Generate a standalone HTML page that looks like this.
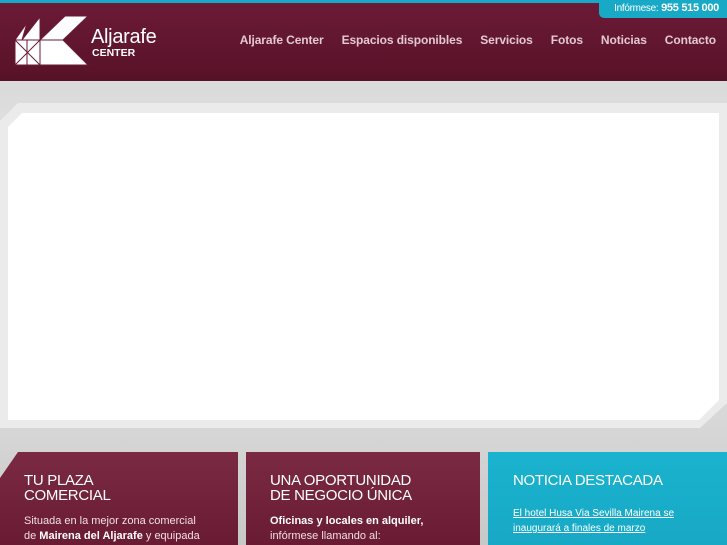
<!DOCTYPE html>
<html><head><meta charset="utf-8"><style>
body{margin:0;width:727px;height:545px;overflow:hidden;font-family:"Liberation Sans",sans-serif;background:linear-gradient(#cfcfcf,#e4e4e4 30%,#dcdcdc 70%,#c8c8c8);position:relative}
.top{position:absolute;left:0;top:0;width:727px;height:3px;background:#17a9c6}
.hdr{position:absolute;left:0;top:3px;width:727px;height:78px;background:linear-gradient(#6c1a37,#571227)}
.info{position:absolute;right:0;top:0;width:128px;height:18px;background:#17a9c6;border-radius:0 0 0 5px;color:#fff;font-size:11px;font-weight:bold;line-height:17px;text-align:right;padding-right:8px;box-sizing:border-box;letter-spacing:-0.3px}
.info span{font-weight:normal;font-size:10px}
nav{position:absolute;top:33px;right:11px;color:#e3c9d1;font-size:12px;font-weight:bold;letter-spacing:-0.1px}
nav a{margin-left:18px}
.panelbg{position:absolute;left:0;top:103px;width:727px;height:325px;background:#ebebeb;clip-path:polygon(18px 0,100% 0,100% 300px,700px 100%,0 100%,0 18px)}
.panel{position:absolute;left:8px;top:113px;width:711px;height:307px;background:#fff;clip-path:polygon(14px 0,100% 0,100% 287px,691px 100%,0 100%,0 14px)}
.box{position:absolute;top:452px;height:93px;color:#fff}
.b1{left:0;width:238px;background:linear-gradient(#7a2a43,#6a1b34);clip-path:polygon(18px 0,100% 0,100% 100%,0 100%,0 26px)}
.b2{left:246px;width:234px;background:linear-gradient(#7a2a43,#6a1b34)}
.b3{left:488px;width:239px;background:linear-gradient(#1ab3cf,#17a8c5)}
h2{margin:0;position:absolute;font-weight:normal;font-size:15px;line-height:15px;letter-spacing:-0.3px}
p{margin:0;position:absolute;font-size:11px;line-height:15px;color:#f0dfe4}
</style></head><body>
<div class="top"></div>
<div class="hdr"></div>
<div class="info"><span>Infórmese:</span> 955 515 000</div>
<svg style="position:absolute;left:0;top:0" width="180" height="80">
<g fill="#fff" stroke="#6a1a35" stroke-width="1">
<polygon points="15,40 40,40 40,65 15,65"/>
<polygon points="22,40 40,17 40,40"/>
<polygon points="15,40 22,40 27,23"/>
<polygon points="40,40 65,16 88,16 63,40"/>
<polygon points="40,40 63,40 88,65 40,65"/>
<line x1="15" y1="65" x2="40" y2="40"/><line x1="40" y1="65" x2="15" y2="40"/>
<line x1="27" y1="40" x2="27" y2="65"/>
</g>
<text x="91" y="43" fill="#fff" font-size="20" font-family="Liberation Sans" letter-spacing="-0.3">Aljarafe</text>
<text x="92" y="56" fill="#fff" font-size="10.5" font-weight="bold" font-family="Liberation Sans">CENTER</text>
</svg>
<nav><a>Aljarafe Center</a><a>Espacios disponibles</a><a>Servicios</a><a>Fotos</a><a>Noticias</a><a>Contacto</a></nav>
<div class="panelbg"></div>
<div class="panel"></div>
<div class="box b1"><h2 style="left:24px;top:21px">TU PLAZA<br>COMERCIAL</h2><p style="left:24px;top:62px">Situada en la mejor zona comercial<br>de <b style="color:#fff">Mairena del Aljarafe</b> y equipada</p></div>
<div class="box b2"><h2 style="left:24px;top:21px">UNA OPORTUNIDAD<br>DE NEGOCIO ÚNICA</h2><p style="left:24px;top:62px"><b style="color:#fff">Oficinas y locales en alquiler,</b><br>infórmese llamando al:</p></div>
<div class="box b3"><h2 style="left:25px;top:21px">NOTICIA DESTACADA</h2><p style="left:25px;top:54px;font-size:10px;color:#fff;text-decoration:underline">El hotel Husa Via Sevilla Mairena se<br>inaugurará a finales de marzo</p></div>
</body></html>
